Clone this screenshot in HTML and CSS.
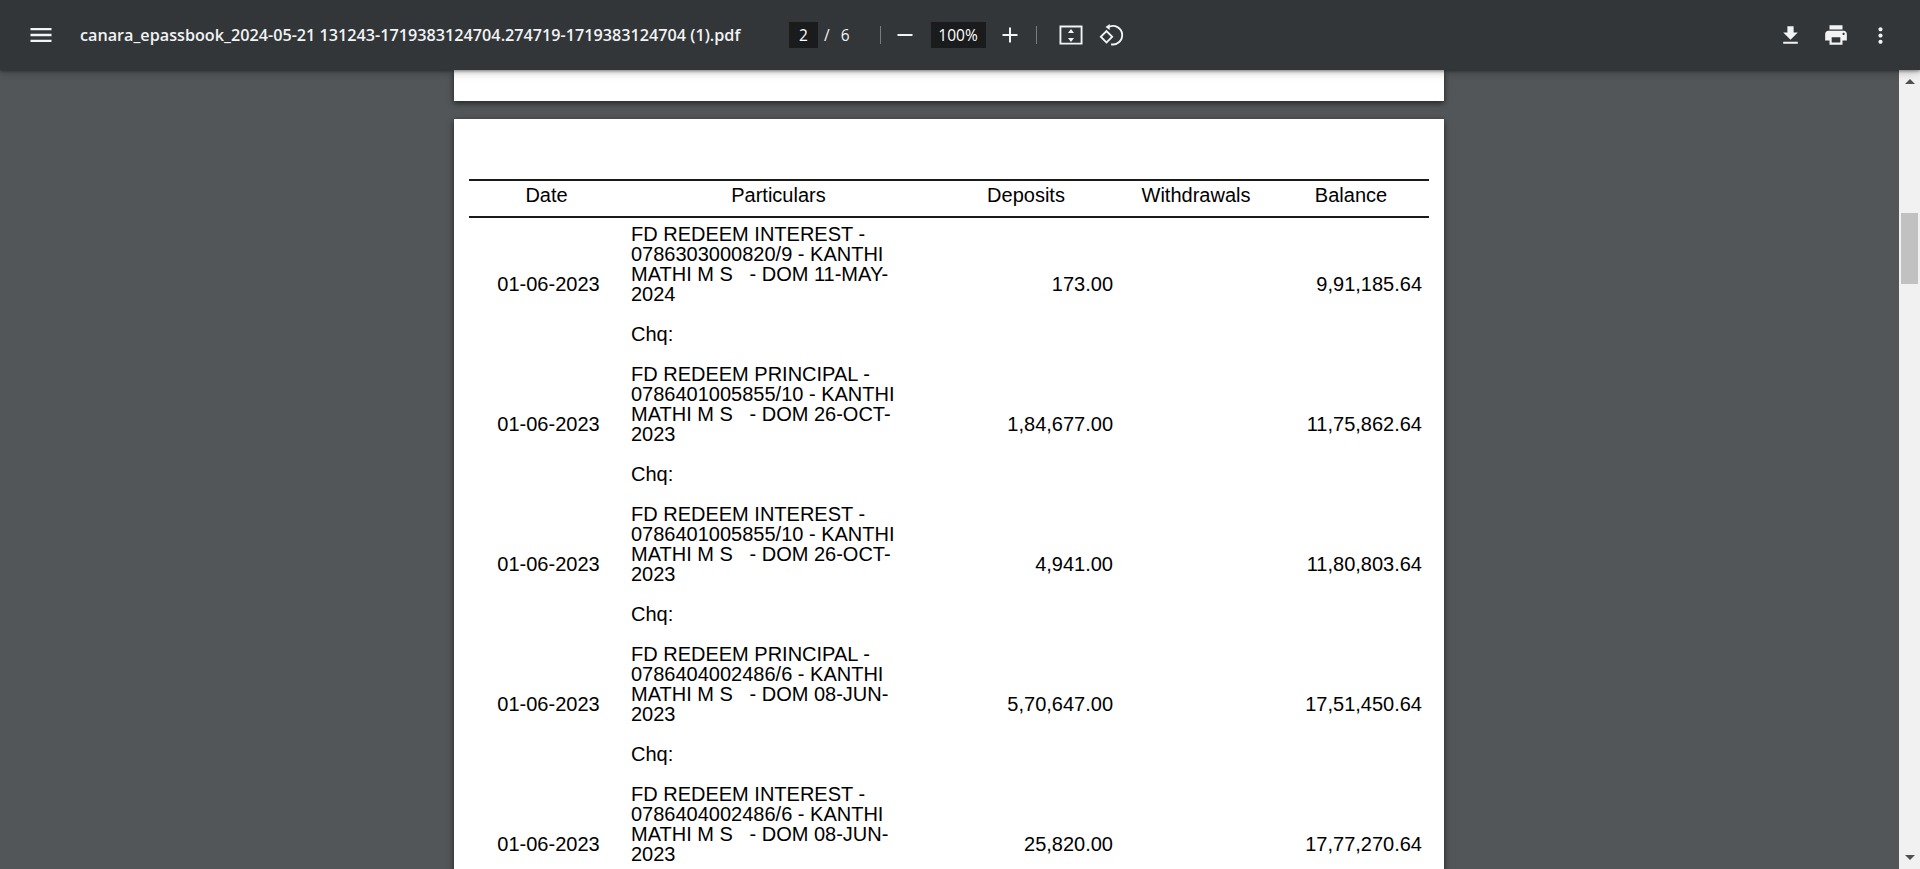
FILE: index.html
```html
<!DOCTYPE html>
<html lang="en">

<head>
    <meta charset="UTF-8">
    <title>canara_epassbook_2024-05-21 131243-1719383124704.274719-1719383124704 (1).pdf</title>
    <link rel="stylesheet" href="styles.css">
</head>

<body>
    <header class="toolbar">
        <div class="toolbar-left">
            <button class="icon-btn menu-btn">
                <svg width="28" height="28" viewBox="0 0 24 24"><path d="M3 18h18v-2H3v2zm0-5h18v-2H3v2zm0-7v2h18V6H3z"/></svg>
            </button>
            <span class="doc-title">canara_epassbook_2024-05-21 131243-1719383124704.274719-1719383124704 (1).pdf</span>
        </div>
        <div class="toolbar-center">
            <span class="num-box page-box">2</span>
            <span class="page-sep">/</span>
            <span class="page-total">6</span>
            <span class="divider first-divider"></span>
            <button class="icon-btn zoom-out">
                <svg width="30" height="30" viewBox="0 0 24 24"><path d="M6 11.200h12v1.600H6z"/></svg>
            </button>
            <span class="num-box zoom-box">100%</span>
            <button class="icon-btn zoom-in">
                <svg width="30" height="30" viewBox="0 0 24 24"><path d="M11.200 6h1.600v5.200H18v1.600h-5.200V18h-1.600v-5.200H6v-1.600h5.200z"/></svg>
            </button>
            <span class="divider second-divider"></span>
            <button class="icon-btn fit-btn">
                <svg width="30" height="30" viewBox="0 0 24 24"><path fill-rule="evenodd" d="M2.800 4.400h18.400v15.200H2.800zM4.300 5.900v12.200h15.400V5.900z"/><path d="M12 7.200l2.400 3.200H9.600zM12 17.600l-2.400-3.200h4.800z"/></svg>
            </button>
            <button class="icon-btn rotate-btn">
                <svg width="30" height="30" viewBox="0 0 24 24"><path fill-rule="evenodd" d="M2.800 13.400l5.600-5.600 5.600 5.600-5.600 5.600zM4.900 13.400l3.500 3.500 3.500-3.500-3.500-3.500z"/><path class="arc" d="M10.500 5.400a7.400 7.400 0 1 1 1.600 14"/><path d="M7.600 5.600L11 3.200V8z"/></svg>
            </button>
        </div>
        <div class="toolbar-right">
            <button class="icon-btn wide-btn">
                <svg width="25" height="25" viewBox="0 0 24 24"><path d="M19 9h-4V3H9v6H5l7 7 7-7zM5 18v2h14v-2H5z"/></svg>
            </button>
            <button class="icon-btn wide-btn">
                <svg width="26" height="26" viewBox="0 0 24 24"><path d="M19 8H5c-1.660 0-3 1.340-3 3v6h4v4h12v-4h4v-6c0-1.660-1.340-3-3-3zm-3 11H8v-5h8v5zm3-7c-.55 0-1-.45-1-1s.45-1 1-1 1 .45 1 1-.45 1-1 1zm-1-9H6v4h12V3z"/></svg>
            </button>
            <button class="icon-btn wide-btn">
                <svg width="25" height="25" viewBox="0 0 24 24"><path d="M12 8c1.100 0 2-.9 2-2s-.9-2-2-2-2 .9-2 2 .9 2 2 2zm0 2c-1.100 0-2 .9-2 2s.9 2 2 2 2-.9 2-2-.9-2-2-2zm0 6c-1.100 0-2 .9-2 2s.9 2 2 2 2-.9 2-2-.9-2-2-2z"/></svg>
            </button>
        </div>
    </header>

    <div class="content">
        <main class="viewer">
            <div class="page page-tail"></div>
            <div class="page">
                <table class="passbook">
                    <thead>
                        <tr>
                            <th class="col-date">Date</th>
                            <th class="col-part">Particulars</th>
                            <th class="col-dep">Deposits</th>
                            <th class="col-wd">Withdrawals</th>
                            <th class="col-bal">Balance</th>
                        </tr>
                    </thead>
                    <tbody>
                        <tr>
                            <td class="date">01-06-2023</td>
                            <td class="part">FD REDEEM INTEREST -<br>0786303000820/9 - KANTHI<br>MATHI M S &nbsp; - DOM 11-MAY-<br>2024<br><br>Chq:</td>
                            <td class="num dep">173.00</td>
                            <td class="num"></td>
                            <td class="num">9,91,185.64</td>
                        </tr>
                        <tr>
                            <td class="date">01-06-2023</td>
                            <td class="part">FD REDEEM PRINCIPAL -<br>0786401005855/10 - KANTHI<br>MATHI M S &nbsp; - DOM 26-OCT-<br>2023<br><br>Chq:</td>
                            <td class="num dep">1,84,677.00</td>
                            <td class="num"></td>
                            <td class="num">11,75,862.64</td>
                        </tr>
                        <tr>
                            <td class="date">01-06-2023</td>
                            <td class="part">FD REDEEM INTEREST -<br>0786401005855/10 - KANTHI<br>MATHI M S &nbsp; - DOM 26-OCT-<br>2023<br><br>Chq:</td>
                            <td class="num dep">4,941.00</td>
                            <td class="num"></td>
                            <td class="num">11,80,803.64</td>
                        </tr>
                        <tr>
                            <td class="date">01-06-2023</td>
                            <td class="part">FD REDEEM PRINCIPAL -<br>0786404002486/6 - KANTHI<br>MATHI M S &nbsp; - DOM 08-JUN-<br>2023<br><br>Chq:</td>
                            <td class="num dep">5,70,647.00</td>
                            <td class="num"></td>
                            <td class="num">17,51,450.64</td>
                        </tr>
                        <tr>
                            <td class="date">01-06-2023</td>
                            <td class="part">FD REDEEM INTEREST -<br>0786404002486/6 - KANTHI<br>MATHI M S &nbsp; - DOM 08-JUN-<br>2023</td>
                            <td class="num dep">25,820.00</td>
                            <td class="num"></td>
                            <td class="num">17,77,270.64</td>
                        </tr>
                    </tbody>
                </table>
            </div>
        </main>
        <aside class="scrollbar">
            <span class="arrow arrow-up"></span>
            <div class="track"><div class="thumb"></div></div>
            <span class="arrow arrow-down"></span>
        </aside>
    </div>
</body>

</html>
```

FILE: styles.css
```css
* {
    box-sizing: border-box;
}

html,
body {
    margin: 0;
    padding: 0;
    height: 100%;
    overflow: hidden;
}

body {
    display: flex;
    flex-direction: column;
    background-color: #525659;
    font-family: "Liberation Sans", Arial, sans-serif;
}

/* toolbar */
.toolbar {
    position: relative;
    z-index: 2;
    flex: 0 0 70px;
    display: flex;
    align-items: center;
    background-color: #323639;
    color: #f1f3f4;
    box-shadow: 0 1px 3px rgba(0, 0, 0, 0.4), 0 2px 8px rgba(0, 0, 0, 0.25);
    font-family: "Open Sans", "Noto Sans", sans-serif;
}

.toolbar-left {
    display: flex;
    align-items: center;
    width: 789px;
    padding-left: 26px;
}

.toolbar-center {
    display: flex;
    align-items: center;
}

.toolbar-right {
    display: flex;
    align-items: center;
    margin-left: auto;
    padding-right: 17px;
}

.icon-btn {
    display: flex;
    align-items: center;
    justify-content: center;
    width: 30px;
    height: 30px;
    padding: 0;
    border: 0;
    background: none;
}

.wide-btn {
    width: 45px;
}

.icon-btn svg {
    display: block;
    fill: #f1f3f4;
}

.icon-btn .arc {
    fill: none;
    stroke: #f1f3f4;
    stroke-width: 1.5;
}

.doc-title {
    margin-left: 24px;
    font-size: 16.2px;
    font-weight: 600;
    white-space: nowrap;
}

.num-box {
    display: flex;
    align-items: center;
    justify-content: center;
    height: 26px;
    background-color: #191b1c;
    color: #fff;
    font-size: 15.5px;
}

.page-box {
    width: 29px;
}

.zoom-box {
    width: 55px;
}

.page-sep {
    margin-left: 6px;
    font-size: 15.5px;
}

.page-total {
    margin-left: 11px;
    font-size: 15.5px;
}

.divider {
    width: 1px;
    height: 18px;
    background-color: rgba(255, 255, 255, 0.35);
}

.first-divider {
    margin-left: 30px;
}

.zoom-out {
    margin: 0 11px 0 9px;
}

.zoom-in {
    margin: 0 10.5px 0 9.5px;
}

.fit-btn {
    margin-left: 19.5px;
}

.rotate-btn {
    margin-left: 10px;
}

/* page area */
.content {
    flex: 1;
    display: flex;
    min-height: 0;
}

.viewer {
    flex: 1;
    overflow: hidden;
    display: flex;
    flex-direction: column;
    align-items: center;
    padding-right: 1px;
}

.page {
    flex: none;
    width: 990px;
    padding: 60px 15px 0;
    background-color: #fff;
    box-shadow: 0 2px 6px rgba(0, 0, 0, 0.6);
}

.page-tail {
    height: 31px;
    padding: 0;
    margin-bottom: 18px;
}

.passbook {
    width: 960px;
    border-collapse: collapse;
    table-layout: fixed;
    color: #000;
    font-size: 20px;
    line-height: 20px;
}

.passbook th {
    height: 37px;
    padding: 0 7px 8px;
    border-top: 2px solid #1a1a1a;
    border-bottom: 2px solid #1a1a1a;
    font-weight: normal;
    text-align: center;
}

.col-date {
    width: 155px;
}

.col-part {
    width: 309px;
}

.col-dep {
    width: 186px;
}

.col-wd {
    width: 154px;
}

.col-bal {
    width: 156px;
}

.passbook td {
    height: 140px;
    padding: 6px 7px 14px;
    vertical-align: middle;
    white-space: nowrap;
}

.passbook .part {
    vertical-align: top;
}

.passbook .date {
    padding-left: 11px;
    text-align: center;
}

.passbook .num {
    text-align: right;
}

.passbook .dep {
    padding-right: 6px;
}

/* scrollbar */
.scrollbar {
    flex: 0 0 21px;
    display: flex;
    flex-direction: column;
    align-items: center;
    background-color: #f1f1f1;
}

.arrow {
    flex: none;
    width: 0;
    height: 0;
    border-left: 5px solid transparent;
    border-right: 5px solid transparent;
}

.arrow-up {
    margin-top: 9px;
    border-bottom: 5px solid #505050;
}

.arrow-down {
    margin-bottom: 9px;
    border-top: 5px solid #505050;
}

.track {
    flex: 1;
    align-self: stretch;
    padding: 129px 2px 0;
}

.thumb {
    height: 71px;
    background-color: #c1c1c1;
}
```
